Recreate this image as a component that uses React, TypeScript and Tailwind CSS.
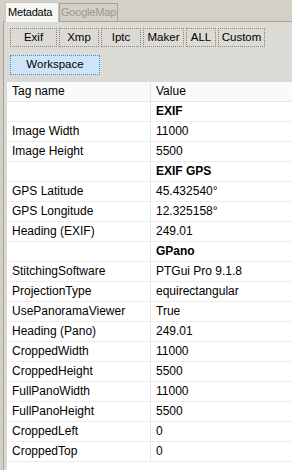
const buttons = [
  { label: "Exif", w: "w-[47px]" },
  { label: "Xmp", w: "w-[40px]" },
  { label: "Iptc", w: "w-[40px]" },
  { label: "Maker", w: "w-[41px]" },
  { label: "ALL", w: "w-[30px]" },
  { label: "Custom", w: "w-[47px]" },
];

type Row = { tag: string; value: string; section?: boolean };

const rows: Row[] = [
  { tag: "", value: "EXIF", section: true },
  { tag: "Image Width", value: "11000" },
  { tag: "Image Height", value: "5500" },
  { tag: "", value: "EXIF GPS", section: true },
  { tag: "GPS Latitude", value: "45.432540°" },
  { tag: "GPS Longitude", value: "12.325158°" },
  { tag: "Heading (EXIF)", value: "249.01" },
  { tag: "", value: "GPano", section: true },
  { tag: "StitchingSoftware", value: "PTGui Pro 9.1.8" },
  { tag: "ProjectionType", value: "equirectangular" },
  { tag: "UsePanoramaViewer", value: "True" },
  { tag: "Heading (Pano)", value: "249.01" },
  { tag: "CroppedWidth", value: "11000" },
  { tag: "CroppedHeight", value: "5500" },
  { tag: "FullPanoWidth", value: "11000" },
  { tag: "FullPanoHeight", value: "5500" },
  { tag: "CroppedLeft", value: "0" },
  { tag: "CroppedTop", value: "0" },
];

export default function App() {
  return (
    <div className="w-[292px] h-[470px] overflow-hidden bg-[#d4d0c8] flex flex-col font-['Liberation_Sans',Arial,sans-serif] text-[12px] text-black">
      {/* tab strip */}
      <div className="ml-[3px] pl-[2px] h-[22px] flex items-end border-b border-[#a7a398] shrink-0 text-[11px] tracking-[-0.2px]">
        <div className="w-[54px] h-[20px] -mb-px bg-[#f6f6f4] border border-b-0 border-[#c9c5bc] pl-[2px] leading-[18px] z-10 whitespace-nowrap">
          Metadata
        </div>
        <div className="w-[59px] h-[18px] border border-b-0 border-[#a7a398] pl-[1px] leading-[16px] text-[#9b978f] whitespace-nowrap">
          GoogleMap
        </div>
      </div>

      {/* panel */}
      <div className="ml-[3px] flex-1 flex flex-col border-l border-[#a7a398] bg-[#dcdad5]">
        <div className="pl-[6px] pt-[6px] flex gap-[2px] text-[11.5px]">
          {buttons.map((b) => (
            <div
              key={b.label}
              className={`${b.w} h-[19px] border border-dotted border-[#8d8474] flex items-center justify-center whitespace-nowrap`}
            >
              {b.label}
            </div>
          ))}
        </div>
        <div className="pl-[6px] pt-[8px] text-[11.5px]">
          <div className="w-[90px] h-[20px] border border-dotted border-[#3c8ed8] bg-[#cfe5f7] flex items-center justify-center">
            Workspace
          </div>
        </div>

        <div className="mt-[7px] ml-[3px] flex-1 bg-white">
          <div className="grid grid-cols-[144px_1fr] h-[20px] bg-[#fafafa] border-b border-[#e6e6e6]">
            <div className="pl-[5px] leading-[19px] border-r border-[#e4e4e4]">Tag name</div>
            <div className="pl-[5px] leading-[19px]">Value</div>
          </div>
          {rows.map((r, i) => (
            <div key={i} className="grid grid-cols-[144px_1fr] h-[20px] border-b border-[#ececec]">
              <div className="pl-[5px] leading-[19px] border-r border-[#e8e8e8] whitespace-nowrap">{r.tag}</div>
              <div className={`pl-[5px] leading-[19px] whitespace-nowrap ${r.section ? "font-bold" : ""}`}>
                {r.value}
              </div>
            </div>
          ))}
        </div>
      </div>
    </div>
  );
}
